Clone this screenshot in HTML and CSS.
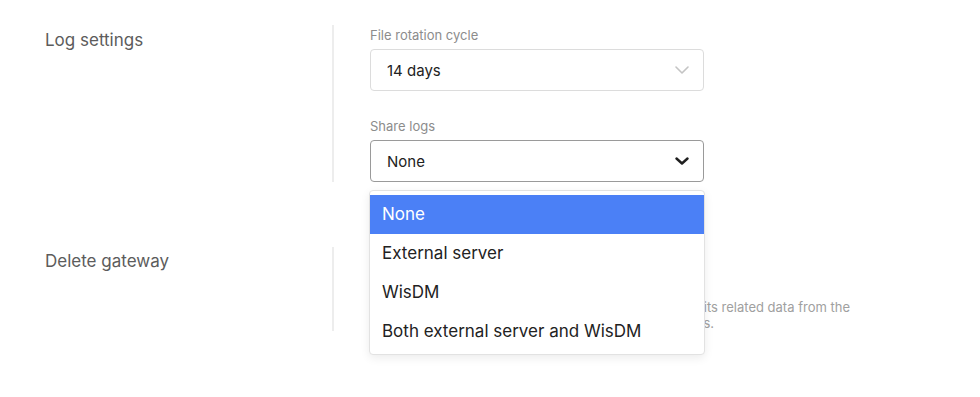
FILE: index.html
```html
<!DOCTYPE html>
<html lang="en">
<head>
    <meta charset="UTF-8">
    <meta name="viewport" content="width=device-width, initial-scale=1.0">
    <title>Gateway settings</title>
    <link rel="stylesheet" href="styles.css">
</head>
<body>
    <div class="settings">
        <div class="section">
            <div class="section-title">Log settings</div>
            <div class="section-body">
                <div class="field">
                    <div class="field-label">File rotation cycle</div>
                    <div class="select">
                        <span>14 days</span>
                        <svg class="chevron light" width="14" height="8" viewBox="0 0 14 8"><path d="M1 1l6 6 6-6" fill="none" stroke="#c4c4c4" stroke-width="1.6" stroke-linecap="round" stroke-linejoin="round"/></svg>
                    </div>
                </div>
                <div class="field">
                    <div class="field-label">Share logs</div>
                    <div class="select-wrap">
                        <div class="select active">
                            <span>None</span>
                            <svg class="chevron" width="14" height="8" viewBox="0 0 14 8"><path d="M1.5 1.5l5.5 5 5.5-5" fill="none" stroke="#1f1f1f" stroke-width="2.4" stroke-linecap="round" stroke-linejoin="round"/></svg>
                        </div>
                        <ul class="dropdown">
                            <li class="selected">None</li>
                            <li>External server</li>
                            <li>WisDM</li>
                            <li>Both external server and WisDM</li>
                        </ul>
                    </div>
                </div>
            </div>
        </div>

        <div class="section">
            <div class="section-title">Delete gateway</div>
            <div class="section-body">
                <button class="danger-button">Delete gateway</button>
                <p class="hint">
                    <span class="hint-line first">This will permanently delete this gateway and all its related data from the</span>
                    <span class="hint-line second">WisDM cloud, including its logs and statistics.</span>
                </p>
            </div>
        </div>
    </div>
</body>
</html>
```

FILE: styles.css
```css
body {
    font-family: 'Inter', 'Noto Sans', sans-serif;
    margin: 0;
    background-color: #fff;
    color: #222;
}
.settings {
    padding-top: 25px;
}
.section {
    display: flex;
    margin-bottom: 65px;
}
.section-title {
    width: 287px;
    padding-left: 45px;
    padding-top: 4px;
    font-size: 17px;
    line-height: 22px;
    color: #5c5c5c;
}
.section:last-child .section-title {
    padding-top: 3px;
}
.section-body {
    border-left: 2px solid #ededed;
    padding-left: 36px;
    padding-top: 1px;
}
.field {
    margin-bottom: 26px;
}
.field:last-child {
    margin-bottom: 0;
}
.field-label {
    font-size: 13px;
    line-height: 18px;
    color: #8c8c8c;
    margin-bottom: 5px;
}
.select {
    box-sizing: border-box;
    width: 334px;
    height: 42px;
    border: 1px solid #dcdcdc;
    border-radius: 4px;
    display: flex;
    align-items: center;
    justify-content: space-between;
    padding: 0 14px 0 16px;
    font-size: 15px;
    color: #222;
}
.select.active {
    border-color: #9a9a9a;
}
.select-wrap {
    position: relative;
}
.dropdown {
    position: absolute;
    z-index: 10;
    top: 50px;
    left: -1px;
    width: 336px;
    box-sizing: border-box;
    margin: 0;
    padding: 4px 0 3px;
    list-style: none;
    background-color: #fff;
    border: 1px solid #e2e2e2;
    border-radius: 4px;
    box-shadow: 0 3px 10px rgba(0, 0, 0, 0.08);
}
.dropdown li {
    height: 39px;
    line-height: 39px;
    padding-left: 12px;
    font-size: 17px;
    color: #222;
}
.dropdown li.selected {
    background-color: #4b80f6;
    color: #fff;
}
.danger-button {
    font-family: inherit;
    font-size: 14px;
    height: 36px;
    padding: 0 16px;
    margin-top: 4px;
    border: 1px solid #e05252;
    border-radius: 4px;
    background-color: #fff;
    color: #d93b3b;
}
.hint {
    margin: 11px 0 0;
    font-size: 13px;
    line-height: 16px;
    color: #a0a0a0;
}
.hint-line {
    display: block;
    white-space: nowrap;
    text-align: right;
}
.hint-line.first {
    width: 480px;
}
.hint-line.second {
    width: 344px;
}
```
